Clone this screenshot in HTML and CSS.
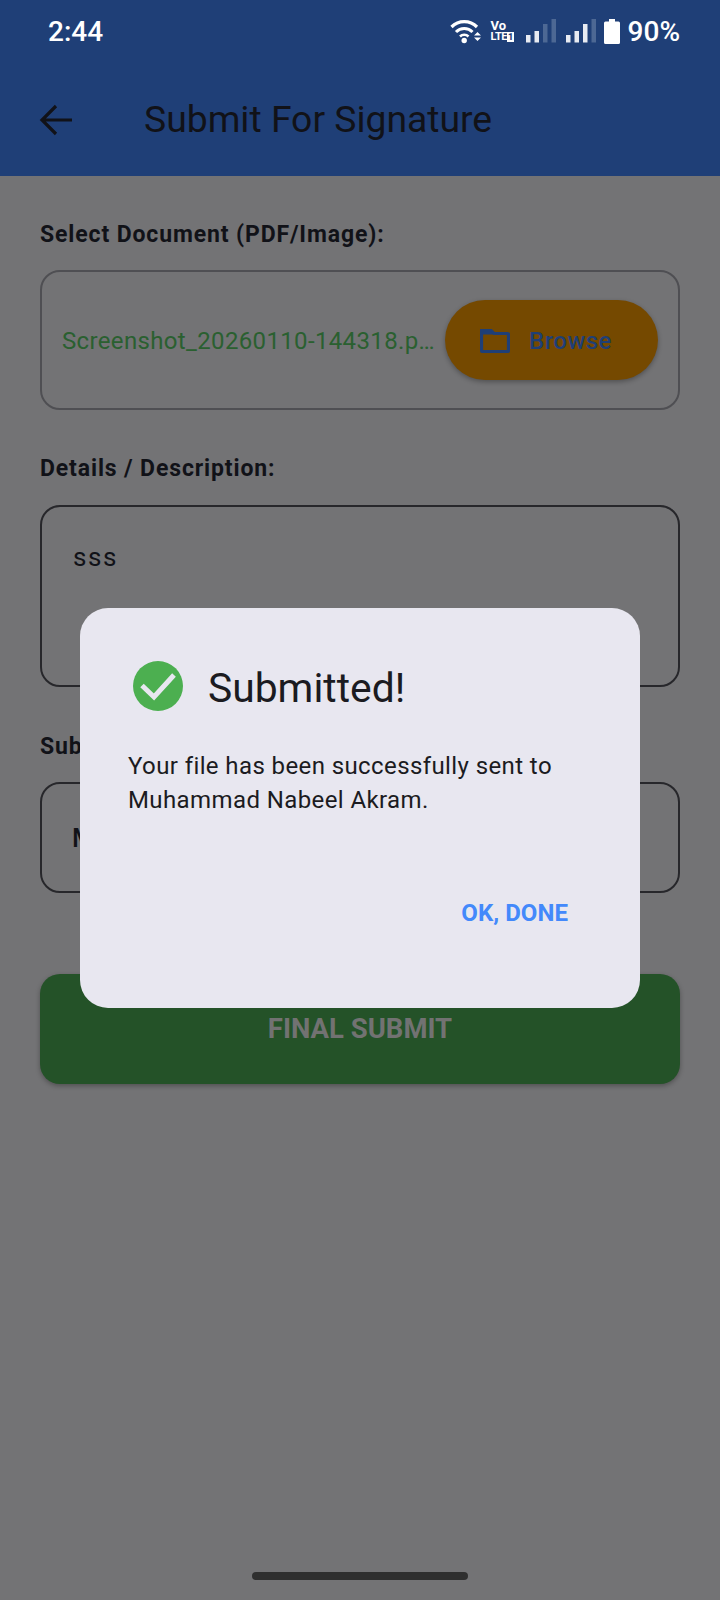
FILE: index.html
```html
<!DOCTYPE html>
<html lang="en">
<head>
<meta charset="utf-8">
<title>Submit For Signature</title>
<link rel="stylesheet" href="styles.css">
</head>
<body>
<div class="screen">
  <header class="top">
    <div class="status">
      <span class="time">2:44</span>
      <div class="status-icons">
        <svg class="ico wifi" width="32" height="26" viewBox="0 0 32 26"><path d="M1.500 9 A18 18 0 0 1 27 9" fill="none" stroke="#fff" stroke-width="3.200"/><path d="M6 14 A11.500 11.500 0 0 1 22.500 14" fill="none" stroke="#fff" stroke-width="3"/><path d="M10 18.500 A6 6 0 0 1 18.500 18.500" fill="none" stroke="#fff" stroke-width="2.600"/><circle cx="14.200" cy="22.500" r="2.700" fill="#fff"/><path d="M24 17.500 L27.500 14 L31 17.500Z M24 19.500 L31 19.500 L27.500 23Z" fill="#fff"/></svg>
        <div class="ico volte"><span class="vo">Vo</span><span class="lte">LTE<b>1</b></span></div>
        <svg class="ico sig" width="30" height="26" viewBox="0 0 30 26"><rect x="0" y="17" width="4.500" height="7.500" fill="#e8ebf2"/><rect x="8.500" y="13" width="4.500" height="11.500" fill="#e8ebf2"/><rect x="17" y="6" width="4.500" height="18.500" fill="#4d6894"/><rect x="25.500" y="1" width="4.500" height="23.500" fill="#4d6894"/></svg>
        <svg class="ico sig" width="30" height="26" viewBox="0 0 30 26"><rect x="0" y="17" width="4.500" height="7.500" fill="#e8ebf2"/><rect x="8.500" y="13" width="4.500" height="11.500" fill="#e8ebf2"/><rect x="17" y="6" width="4.500" height="18.500" fill="#e8ebf2"/><rect x="25.500" y="1" width="4.500" height="23.500" fill="#4d6894"/></svg>
        <svg class="ico batt" width="16" height="26" viewBox="0 0 16 26"><path d="M5 1h6v2.500h3.500a1.500 1.500 0 0 1 1.500 1.500v19.500a1.500 1.500 0 0 1-1.500 1.500h-13a1.500 1.500 0 0 1-1.500-1.500v-19.500a1.500 1.500 0 0 1 1.500-1.500h3.500z" fill="#fff"/></svg>
        <span class="pct">90%</span>
      </div>
    </div>
    <div class="appbar">
      <svg class="back" width="34" height="32" viewBox="0 0 34 32"><path d="M33 16H3M17 2 3 16 17 30" fill="none" stroke="#111218" stroke-width="3.200"/></svg>
      <h1 class="title">Submit For Signature</h1>
    </div>
  </header>

  <main class="form">
    <div class="label label-1">Select Document (PDF/Image):</div>
    <div class="field file-field">
      <span class="filename">Screenshot_20260110-144318.p…</span>
      <div class="browse">
        <svg width="30" height="24" viewBox="0 0 30 24"><path d="M1.500 1.500h9.500l3 3h13.500a1 1 0 0 1 1 1v16a1 1 0 0 1-1 1h-25a1 1 0 0 1-1-1z" fill="none" stroke="#1f3f77" stroke-width="3.200"/><path d="M2 2h8.500l2.500 3.500H2z" fill="#1f3f77"/></svg>
        <span>Browse</span>
      </div>
    </div>

    <div class="label label-2">Details / Description:</div>
    <div class="field desc-field"><span>sss</span></div>

    <div class="label label-3">Submit To:</div>
    <div class="field to-field"><span>Muhammad Nabeel Akram</span></div>

    <div class="submit">FINAL SUBMIT</div>
  </main>

  <div class="home"></div>

  <section class="dialog">
    <div class="dialog-head">
      <svg width="50" height="50" viewBox="0 0 50 50"><circle cx="25" cy="25" r="25" fill="#4caf50"/><path d="M9 24.500 21 36 41 14" fill="none" stroke="#e8e7f0" stroke-width="5"/></svg>
      <h2>Submitted!</h2>
    </div>
    <p>Your file has been successfully sent to Muhammad Nabeel Akram.</p>
    <div class="actions"><span>OK, DONE</span></div>
  </section>
</div>
</body>
</html>
```
FILE: styles.css
```css
* { box-sizing: border-box; }
html, body { margin: 0; padding: 0; }
body { font-family: Roboto, "Liberation Sans", sans-serif; background: #737375; }
.screen { position: relative; width: 720px; height: 1600px; overflow: hidden; background: #737375; }

.top { height: 176px; background: #1f3f77; }
.status { height: 64px; padding: 12px 40px 0 48px; display: flex; justify-content: space-between; align-items: flex-start; color: #fff; }
.time { font-size: 28px; line-height: 40px; font-weight: 500; }
.status-icons { display: flex; align-items: center; height: 40px; }
.ico { margin-top: -2px; flex: none; }
.wifi { margin-right: 9px; }
.volte { width: 26px; margin-right: 9px; display: flex; flex-direction: column; line-height: 11px; font-weight: 700; color: #fff; }
.vo { font-size: 13px; }
.lte { font-size: 11px; letter-spacing: -0.4px; white-space: nowrap; }
.lte b { font-size: 9px; background: #fff; color: #1f3f77; padding: 0 1px; }
.sig { margin-right: 10px; }
.sig + .batt { margin-left: -2px; }
.pct { font-size: 28px; line-height: 40px; margin-left: 8px; font-weight: 500; }
.appbar { height: 112px; padding: 0 0 0 39px; display: flex; align-items: center; }
.back { margin-right: 71px; flex: none; }
.title { margin: -2px 0 0; font-size: 37.300px; font-weight: 400; color: #111218; line-height: 44px; }

.form { padding: 0 40px; }
.label { font-size: 23px; font-weight: 700; line-height: 32px; color: #111218; letter-spacing: 0.87px; height: 32px; }
.label-1 { margin-top: 43px; height: 31px; }
.label-2 { margin-top: 43px; }
.label-3 { margin-top: 44px; }
.field { border: 2px solid #27272b; border-radius: 20px; display: flex; align-items: center; }
.file-field { margin-top: 20px; height: 140px; padding: 0 20px; border-color: #4f4f53; justify-content: space-between; }
.filename { margin-top: 2px; font-size: 24px; color: #2a6030; letter-spacing: 0.35px; white-space: nowrap; }
.browse { flex: none; width: 213px; height: 80px; border-radius: 40px; background: #754900; display: flex; align-items: center; padding: 1px 0 0 35px; gap: 19px; color: #1f3f77; font-size: 24px; font-weight: 500; letter-spacing: 0.5px; box-shadow: 0 2px 5px rgba(0,0,0,.3); }
.desc-field { height: 182px; margin-top: 20px; align-items: flex-start; padding: 33px 31px; font-size: 26px; line-height: 34px; letter-spacing: 1.6px; color: #111218; }
.to-field { height: 111px; margin-top: 19px; padding: 0 30px; font-size: 26px; font-weight: 500; color: #111218; white-space: nowrap; }
.submit { margin-top: 81px; height: 110px; border-radius: 20px; background: #245228; color: #727272; font-size: 27.500px; font-weight: 700; text-align: center; line-height: 32px; padding-top: 39px; box-shadow: 0 2px 5px rgba(0,0,0,.3); }

.home { position: absolute; left: 252px; top: 1572px; width: 216px; height: 8px; border-radius: 4px; background: #2f2f2f; }

.dialog { position: absolute; left: 80px; top: 608px; width: 560px; height: 400px; border-radius: 28px; background: #e8e7f0; padding: 53px 49px 0 48px; color: #1b1b21; }
.dialog-head { display: flex; align-items: center; gap: 25px; height: 50px; padding-left: 5px; }
.dialog-head h2 { margin: 0; padding-top: 3px; font-size: 40.800px; font-weight: 400; line-height: 50px; }
.dialog p { margin: 38px 0 0; font-size: 24px; line-height: 34px; letter-spacing: 0.4px; }
.actions { display: flex; justify-content: flex-end; margin-top: 80px; padding-right: 23px; font-size: 24px; font-weight: 700; color: #4389fb; line-height: 32px; letter-spacing: 0.05px; }
```
